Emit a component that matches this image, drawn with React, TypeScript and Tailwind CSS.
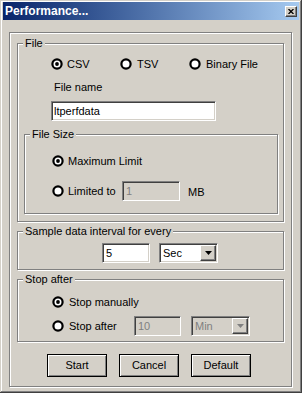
import React from "react";

const sunken =
  "border border-t-[#808080] border-l-[#808080] border-r-white border-b-white shadow-[inset_1px_1px_0_#404040,inset_-1px_-1px_0_#d4d0c8]";
const raised =
  "border border-t-white border-l-white border-r-[#404040] border-b-[#404040] shadow-[inset_-1px_-1px_0_#808080]";

function Group({
  label,
  className,
  children,
}: {
  label?: string;
  className: string;
  children: React.ReactNode;
}) {
  return (
    <div
      className={
        "relative border border-[#808080] shadow-[inset_1px_1px_0_#fff,1px_1px_0_#fff] " +
        className
      }
    >
      {label && (
        <span className="absolute left-[5px] top-[-7px] bg-[#d4d0c8] px-[2px] leading-[13px] whitespace-nowrap">
          {label}
        </span>
      )}
      {children}
    </div>
  );
}

function Radio({ checked }: { checked?: boolean }) {
  return (
    <svg width="12" height="12" viewBox="0 0 12 12" className="shrink-0 block">
      <circle cx="6" cy="6" r="4.6" fill="#fff" stroke="#000" strokeWidth="2.2" />
      {checked && <circle cx="6" cy="6" r="1.9" fill="#000" />}
    </svg>
  );
}

function Arrow({ disabled }: { disabled?: boolean }) {
  return (
    <svg width="7" height="4" viewBox="0 0 7 4" className="block">
      <path d="M0 0 H7 L3.5 4 Z" fill={disabled ? "#808080" : "#000"} />
    </svg>
  );
}

function Select({ value, disabled, className }: { value: string; disabled?: boolean; className: string }) {
  return (
    <div
      className={
        sunken +
        " flex items-center h-[20px] w-[59px] p-[1px] " +
        (disabled ? "bg-[#d4d0c8] text-[#808080] " : "bg-white text-black ") +
        className
      }
    >
      <div className="flex-1 pl-[2px] leading-[16px]">{value}</div>
      <div className={raised + " w-[16px] h-[16px] bg-[#d4d0c8] flex items-center justify-center"}>
        <Arrow disabled={disabled} />
      </div>
    </div>
  );
}

function Button({ label }: { label: string }) {
  return (
    <div className="w-[60px] h-[23px] border border-black bg-[#d4d0c8] shadow-[inset_1px_1px_0_#fff,inset_-1px_-1px_0_#808080] flex items-center justify-center leading-[13px]">
      {label}
    </div>
  );
}

export default function App() {
  return (
    <div className="w-[302px] h-[393px] bg-[#d4d0c8] pt-[2px] px-[3px] shadow-[inset_-1px_-1px_0_#404040,inset_1px_1px_0_#d4d0c8,inset_-2px_-2px_0_#808080,inset_2px_2px_0_#fff] font-['Liberation_Sans',Arial,sans-serif] text-[11px] text-black overflow-hidden">
      {/* Title bar */}
      <div className="h-[18px] bg-linear-to-r from-[#0a246a] to-[#a6caf0] flex items-center justify-between pl-[2px] pr-[2px]">
        <span className="text-white font-bold text-[12px] leading-[14px]">Performance...</span>
        <div className={raised + " w-[12px] h-[11px] bg-[#d4d0c8] flex items-center justify-center"}>
          <svg width="6" height="5" viewBox="0 0 6 5" className="block">
            <path d="M0.5 0 L5.5 5 M5.5 0 L0.5 5" stroke="#000" strokeWidth="1.3" />
          </svg>
        </div>
      </div>

      {/* Outer etched box */}
      <Group className="mt-[12px] ml-[6px] mr-[7px] px-[7px] pb-[9px]">
        {/* File */}
        <Group label="File" className="mt-[10px] pb-[7px]">
          <div className="mt-[14px] pl-[33px] flex h-[12px] items-center">
            <div className="w-[69px] flex items-center">
              <Radio checked />
              <span className="ml-[4px] leading-[12px]">CSV</span>
            </div>
            <div className="w-[69px] flex items-center">
              <Radio />
              <span className="ml-[5px] leading-[12px]">TSV</span>
            </div>
            <div className="flex items-center">
              <Radio />
              <span className="ml-[5px] leading-[12px]">Binary File</span>
            </div>
          </div>
          <div className="mt-[11px] pl-[36px] leading-[13px]">File name</div>
          <div className={sunken + " mt-[7px] ml-[33px] w-[165px] h-[20px] bg-white flex items-center pl-[2px] leading-[13px]"}>
            ltperfdata
          </div>

          <Group label="File Size" className="mt-[13px] ml-[6px] mr-[5px] pb-[12px]">
            <div className="mt-[16px] pl-[27px] h-[20px] flex items-center">
              <Radio checked />
              <span className="ml-[4px] leading-[13px]">Maximum Limit</span>
            </div>
            <div className="mt-[10px] pl-[27px] h-[20px] flex items-center">
              <Radio />
              <span className="ml-[4px] w-[54px] leading-[13px]">Limited to</span>
              <div className={sunken + " w-[58px] h-[20px] bg-[#d4d0c8] text-[#808080] flex items-center pl-[3px] leading-[13px]"}>
                1
              </div>
              <span className="ml-[8px] leading-[13px] pt-[2px]">MB</span>
            </div>
          </Group>
        </Group>

        {/* Sample */}
        <Group label="Sample data interval for every" className="mt-[9px] pb-[6px]">
          <div className="mt-[11px] pl-[84px] flex items-center h-[20px]">
            <div className={sunken + " w-[48px] h-[20px] bg-white flex items-center pl-[3px] leading-[13px]"}>5</div>
            <Select value="Sec" className="ml-[9px]" />
          </div>
        </Group>

        {/* Stop after */}
        <Group label="Stop after" className="mt-[9px] pb-[5px]">
          <div className="mt-[12px] pl-[34px] h-[20px] flex items-center">
            <Radio checked />
            <span className="ml-[5px] leading-[13px]">Stop manually</span>
          </div>
          <div className="mt-[4px] pl-[34px] h-[20px] flex items-center">
            <Radio />
            <span className="ml-[5px] w-[65px] leading-[13px]">Stop after</span>
            <div className={sunken + " w-[47px] h-[20px] bg-[#d4d0c8] text-[#808080] flex items-center pl-[3px] leading-[13px]"}>
              10
            </div>
            <Select value="Min" disabled className="ml-[10px]" />
          </div>
        </Group>

        {/* Buttons */}
        <div className="mt-[12px] pl-[30px] flex gap-[12px]">
          <Button label="Start" />
          <Button label="Cancel" />
          <Button label="Default" />
        </div>
      </Group>
    </div>
  );
}
